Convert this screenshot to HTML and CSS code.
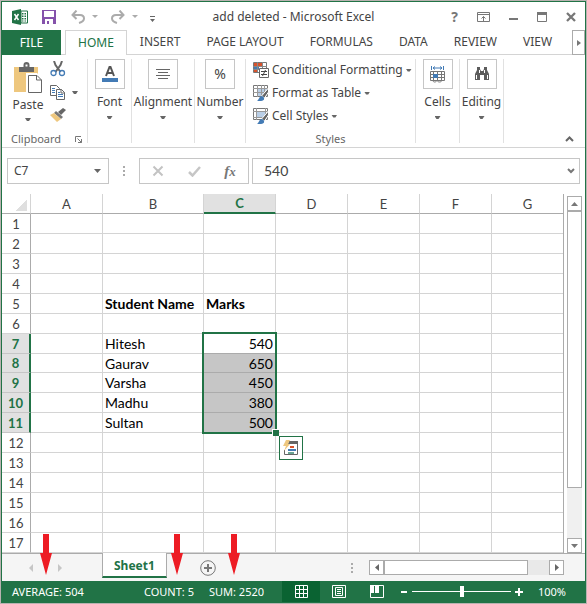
FILE: index.html
```html
<!DOCTYPE html>
<html lang="en">
<head>
<meta charset="utf-8">
<title>add deleted - Microsoft Excel</title>
<link rel="stylesheet" href="styles.css">
</head>
<body>
<div class="window">
  <header class="titlebar">
    <svg class="app-logo" width="16" height="16" viewBox="0 0 16 16" aria-hidden="true"><path d="M9 2h6.500v12H9z" fill="#fff" stroke="#217346"/><path d="M10 4h1.500v1.500H10zM12.500 4H14v1.500h-1.500zM10 6.500h1.500V8H10zM12.500 6.500H14V8h-1.500zM10 9h1.500v1.500H10zM12.500 9H14v1.500h-1.500zM10 11.500h1.500v1H10zM12.500 11.500H14v1h-1.500z" fill="#217346"/><path d="M0 2l9-2v16l-9-2z" fill="#217346"/><path d="M2.500 5l4 6M6.500 5l-4 6" stroke="#fff" stroke-width="1.500"/></svg>
    <button class="quick" aria-label="Save"><svg width="14" height="14" viewBox="0 0 14 14"><path d="M0 0h14v14H0z" fill="#8552ab"/><path d="M2 1h10v6H2zM3 9h8v5H3z" fill="#fff"/><path d="M5 11h2v3H5z" fill="#8552ab"/></svg></button>
    <button class="quick" aria-label="Undo"><svg width="14" height="14" viewBox="0 0 14 14" fill="none" stroke="#ababab" stroke-width="2"><path d="M5.500 0.500L1.500 5l4 4M2 5h7c3 0 4 2 4 3.500S11.500 12 8 13"/></svg></button>
    <button class="drop pale" aria-label="Undo history"></button>
    <button class="quick" aria-label="Redo"><svg width="14" height="14" viewBox="0 0 14 14" fill="none" stroke="#ababab" stroke-width="2"><path d="M8.500 0.500L12.500 5l-4 4M12 5H5C2 5 1 7 1 8.500S2.500 12 6 13"/></svg></button>
    <button class="drop pale" aria-label="Redo history"></button>
    <button class="customize" aria-label="Customize toolbar"><svg width="5" height="6" viewBox="0 0 5 6" fill="#666"><path d="M0 0h5v1H0zM0 3h5L2.500 6z"/></svg></button>
    <h1 class="title">add deleted - Microsoft Excel</h1>
    <button class="win-button help" aria-label="Help">?</button>
    <button class="win-button" aria-label="Ribbon display options"><svg width="13" height="10" viewBox="0 0 13 10" fill="none" stroke="#777"><path d="M.5.5h12v9H.5zM.5 2.500h12M6.500 9V4.500M4.500 6.500l2-2 2 2"/></svg></button>
    <button class="win-button" aria-label="Minimize"><svg width="10" height="10" viewBox="0 0 10 10"><path d="M1 6h9v2H1z" fill="#777"/></svg></button>
    <button class="win-button" aria-label="Maximize"><svg width="10" height="10" viewBox="0 0 10 10"><path d="M.5.5h9v9h-9z" fill="none" stroke="#777"/><path d="M0 0h10v3H0z" fill="#777"/></svg></button>
    <button class="win-button" aria-label="Close"><svg width="10" height="10" viewBox="0 0 10 10"><path d="M1 1l8 8M9 1L1 9" stroke="#777" stroke-width="2.300"/></svg></button>
  </header>

  <nav class="tabs" aria-label="Ribbon tabs">
    <button class="file">FILE</button>
    <button class="tab active">HOME</button>
    <button class="tab">INSERT</button>
    <button class="tab">PAGE LAYOUT</button>
    <button class="tab">FORMULAS</button>
    <button class="tab">DATA</button>
    <button class="tab">REVIEW</button>
    <button class="tab">VIEW</button>
    <button class="more-tabs" aria-label="More tabs"><svg width="4" height="6" viewBox="0 0 4 6"><path d="M0 0l4 3-4 3z" fill="#777"/></svg></button>
  </nav>

  <section class="ribbon" aria-label="Home">
    <div class="group clipboard">
      <div class="clip-tools">
        <button class="paste">
          <svg width="30" height="32" viewBox="0 0 30 32"><path d="M1 5h24v25H1z" fill="#eec77e"/><path d="M6 5h4.500V3a3 3 0 0 1 6 0v2H21v5H6z" fill="#666"/><path d="M12.500 2.500h2v2h-2z" fill="#fff"/><path d="M13 11h11l6 6v15H13z" fill="#fff"/><path d="M15.500 13.500H24l4.500 4.500v12.500h-13zM23.500 13.500V18h5" fill="#fff" stroke="#666"/></svg>
          <span>Paste</span><i class="caret"></i>
        </button>
        <div class="clip-side">
          <button aria-label="Cut"><svg width="16" height="16" viewBox="0 0 16 16" fill="none"><path d="M4 0l1.500 4 5 7M12 0l-1.500 4-5 7" stroke="#666" stroke-width="2"/><circle cx="3.500" cy="12" r="2.500" stroke="#437bb5" stroke-width="1.300"/><circle cx="12" cy="12" r="2.500" stroke="#437bb5" stroke-width="1.300"/></svg></button>
          <button class="copy" aria-label="Copy"><svg width="16" height="15" viewBox="0 0 16 15"><path d="M.5.500h6l3 3v7h-9z" fill="#fff" stroke="#666"/><path d="M2 3.500h3M2 5.500h3M2 7.500h3" stroke="#437bb5"/><path d="M6.500 4.500h5l3 3v7h-8z" fill="#fff" stroke="#666"/><path d="M8 7.500h2M8 9.500h5M8 11.500h5" stroke="#437bb5"/><path d="M11 4v4h4" fill="none" stroke="#666"/></svg><i class="caret"></i></button>
          <button aria-label="Format painter"><svg width="16" height="14" viewBox="0 0 16 14"><path d="M13 0l3 2-5 5-3-3z" fill="#666"/><path d="M6 3l7 6-2 2-7-6z" fill="#777"/><path d="M4 5l7 6-4 3L0 7z" fill="#eec77e"/></svg></button>
        </div>
      </div>
      <div class="group-name">Clipboard<button class="launcher" aria-label="Clipboard options"><svg width="7" height="7" viewBox="0 0 7 7" fill="none" stroke="#777"><path d="M.5 6V.5H6M2.500 2.500l4 4M6.500 3v3.500H3"/></svg></button></div>
    </div>
    <div class="group small"><button class="big"><span class="tile"><svg width="16" height="18" viewBox="0 0 16 18"><path d="M4 11L7.500 2h1L12 11M5.500 8h5" fill="none" stroke="#555" stroke-width="2"/><path d="M0 13h16v4H0z" fill="#437bb5"/></svg></span><span>Font</span><i class="caret"></i></button></div>
    <div class="group align"><button class="big"><span class="tile"><svg width="14" height="12" viewBox="0 0 14 12" stroke="#666"><path d="M0 1.500h14M2 4.500h10M0 7.500h14M2 10.500h10"/></svg></span><span>Alignment</span><i class="caret"></i></button></div>
    <div class="group number"><button class="big"><span class="tile percent">%</span><span>Number</span><i class="caret"></i></button></div>
    <div class="group styles">
      <div class="style-list">
        <button><svg width="16" height="16" viewBox="0 0 16 16"><path d="M.5.5h13v10H.5z" fill="#fff" stroke="#777"/><path d="M1 1h8v3H1zM1 8h3v2H1z" fill="#d9532c"/><path d="M1 5h5v2H1z" fill="#437bb5"/><path d="M0 4.500h14M0 7.500h14M4.500 0v10M9.500 0v10" stroke="#888"/><path d="M6.500 6.500h9v9h-9z" fill="#fff" stroke="#666"/><path d="M8 9.500h6M8 12.500h6M12.500 8l-3 6" stroke="#444"/></svg><span>Conditional Formatting</span><i class="caret"></i></button>
        <button><svg width="16" height="16" viewBox="0 0 16 16"><path d="M.5.5h14v11H.5z" fill="#fff" stroke="#777"/><path d="M4 4h10v7H4z" fill="#b9cee6"/><path d="M0 3.500h15M0 7.500h15M4.500 0v12M8.500 0v12M11.500 0v12" stroke="#999"/><path d="M15.500 3v4l-4 6-3-2z" fill="#666" stroke="#fff"/><path d="M4 16c2-1 2-5 5-5 3 1 3 5-1 5z" fill="#437bb5"/></svg><span>Format as Table</span><i class="caret"></i></button>
        <button><svg width="16" height="16" viewBox="0 0 16 16"><path d="M.5.5h14v11H.5z" fill="#fff" stroke="#777"/><path d="M4 4h8v6H4z" fill="#b9cee6"/><path d="M0 3.500h15M3.500 0v12M0 9.500h10M12.500 0v8" stroke="#999"/><path d="M15.500 3v4l-4 6-3-2z" fill="#666" stroke="#fff"/><path d="M4 16c2-1 2-5 5-5 3 1 3 5-1 5z" fill="#437bb5"/></svg><span>Cell Styles</span><i class="caret"></i></button>
      </div>
      <div class="group-name centered">Styles</div>
    </div>
    <div class="group small"><button class="big"><span class="tile"><svg width="16" height="17" viewBox="0 0 16 17" fill="none"><path d="M1.500 0v4M13.500 0v4M3 2h9M5 .5L3 2l2 1.500M10 .5L12 2l-2 1.500" stroke="#437bb5"/><path d="M.5 5.500h14v9H.500zM0 8.500h15M0 11.500h15M3.500 5v9M7.500 5v9M11.500 5v9M3 14.500c0 2 3 2 4 0 1 2 4 2 5 0" stroke="#777"/><path d="M3 8h5v4H3z" fill="#437bb5"/></svg></span><span>Cells</span><i class="caret"></i></button></div>
    <div class="group small"><button class="big"><span class="tile"><svg width="16" height="14" viewBox="0 0 16 14" fill="#5c5c5c"><path d="M3 0h3v2l1 2h2l1-2V0h3v3l2 4v6h-5V8H6v5H1V7l2-4z"/><path d="M2.500 8v4M13.500 8v4M5.500 3v3M10.500 3v3" stroke="#fff"/></svg></span><span>Editing</span><i class="caret"></i></button></div>
    <button class="collapse" aria-label="Collapse ribbon"><svg width="9" height="6" viewBox="0 0 9 6"><path d="M1 5l3.500-3.500L8 5" fill="none" stroke="#666" stroke-width="2"/></svg></button>
  </section>

  <section class="formula-bar" aria-label="Formula bar">
    <div class="name-box"><input aria-label="Name box" value="C7"><button class="drop" aria-label="Names"></button></div>
    <span class="dots"></span>
    <div class="entry">
      <button aria-label="Cancel"><svg width="12" height="12" viewBox="0 0 12 12"><path d="M1.500 1.500l9 9M10.500 1.500l-9 9" stroke="#c3c3c3" stroke-width="2"/></svg></button>
      <button aria-label="Enter"><svg width="13" height="11" viewBox="0 0 13 11"><path d="M1 6l3.500 3.500L12 1" fill="none" stroke="#c6c6c6" stroke-width="2.500"/></svg></button>
      <button class="fx" aria-label="Insert function">f<small>x</small></button>
    </div>
    <div class="formula"><input aria-label="Formula" value="540"><button aria-label="Expand formula bar"><svg width="8" height="6" viewBox="0 0 8 6"><path d="M1 1l3 3 3-3" fill="none" stroke="#777" stroke-width="2"/></svg></button></div>
  </section>

  <main class="sheet">
    <table class="grid">
      <colgroup><col class="c-row"><col class="c-std"><col class="c-name"><col class="c-std"><col class="c-std"><col class="c-std"><col class="c-std"><col></colgroup>
      <thead><tr><th class="corner"></th><th>A</th><th>B</th><th class="on">C</th><th>D</th><th>E</th><th>F</th><th>G</th></tr></thead>
      <tbody>
        <tr><th>1</th><td></td><td></td><td></td><td></td><td></td><td></td><td></td></tr>
        <tr><th>2</th><td></td><td></td><td></td><td></td><td></td><td></td><td></td></tr>
        <tr><th>3</th><td></td><td></td><td></td><td></td><td></td><td></td><td></td></tr>
        <tr><th>4</th><td></td><td></td><td></td><td></td><td></td><td></td><td></td></tr>
        <tr><th>5</th><td></td><td class="bold">Student Name</td><td class="bold">Marks</td><td></td><td></td><td></td><td></td></tr>
        <tr><th>6</th><td></td><td></td><td></td><td></td><td></td><td></td><td></td></tr>
        <tr class="on"><th>7</th><td></td><td>Hitesh</td><td class="num first">540<div class="selection"></div></td><td></td><td></td><td></td><td></td></tr>
        <tr class="on short"><th>8</th><td></td><td>Gaurav</td><td class="num">650</td><td></td><td></td><td></td><td></td></tr>
        <tr class="on"><th>9</th><td></td><td>Varsha</td><td class="num">450</td><td></td><td></td><td></td><td></td></tr>
        <tr class="on"><th>10</th><td></td><td>Madhu</td><td class="num">380</td><td></td><td></td><td></td><td></td></tr>
        <tr class="on"><th>11</th><td></td><td>Sultan</td><td class="num">500<button class="analysis" aria-label="Quick analysis"><svg width="16" height="16" viewBox="0 0 16 16"><path d="M4.500 1.500h10v13h-13V10" fill="none" stroke="#666"/><path d="M6 1h9v3H5z" fill="#666"/><path d="M7 6h4v2H7z" fill="#d9532c"/><path d="M5 9h8v2H5z" fill="#437bb5"/><path d="M5 12h6v2H5z" fill="#6ca494"/><path d="M3 0h4L5 4h2l-6 7 2-5H0z" fill="#eec77e"/></svg></button></td><td></td><td></td><td></td><td></td></tr>
        <tr><th>12</th><td></td><td></td><td></td><td></td><td></td><td></td><td></td></tr>
        <tr><th>13</th><td></td><td></td><td></td><td></td><td></td><td></td><td></td></tr>
        <tr><th>14</th><td></td><td></td><td></td><td></td><td></td><td></td><td></td></tr>
        <tr><th>15</th><td></td><td></td><td></td><td></td><td></td><td></td><td></td></tr>
        <tr><th>16</th><td></td><td></td><td></td><td></td><td></td><td></td><td></td></tr>
        <tr><th>17</th><td></td><td></td><td></td><td></td><td></td><td></td><td></td></tr>
      </tbody>
    </table>
    <div class="vscroll">
      <button class="scroll-button" aria-label="Scroll up"><svg width="7" height="4" viewBox="0 0 7 4"><path d="M0 4l3.500-4L7 4z" fill="#777"/></svg></button>
      <div class="vthumb"></div><div class="vtrack"></div>
      <button class="scroll-button" aria-label="Scroll down"><svg width="7" height="4" viewBox="0 0 7 4"><path d="M0 0l3.500 4L7 0z" fill="#777"/></svg></button>
    </div>
  </main>

  <nav class="sheetbar" aria-label="Sheets">
    <div class="sheet-nav">
      <button aria-label="Previous sheet"><svg width="4" height="8" viewBox="0 0 4 8"><path d="M4 0v8L0 4z" fill="#c6c6c6"/></svg></button>
      <button aria-label="Next sheet"><svg width="4" height="8" viewBox="0 0 4 8"><path d="M0 0v8l4-4z" fill="#c6c6c6"/></svg></button>
    </div>
    <button class="sheet-tab">Sheet1</button>
    <button class="add-sheet" aria-label="New sheet"><svg width="16" height="16" viewBox="0 0 16 16" fill="none" stroke="#777"><circle cx="8" cy="8" r="7.300"/><path d="M8 4v8M4 8h8" stroke-width="2"/></svg></button>
    <span class="dots"></span>
    <div class="hscroll">
      <button class="scroll-button" aria-label="Scroll left"><svg width="4" height="7" viewBox="0 0 4 7"><path d="M4 0v7L0 3.500z" fill="#666"/></svg></button>
      <div class="hthumb"></div><div class="htrack"></div>
      <button class="scroll-button" aria-label="Scroll right"><svg width="4" height="7" viewBox="0 0 4 7"><path d="M0 0v7l4-3.500z" fill="#666"/></svg></button>
    </div>
  </nav>

  <footer class="status">
    <span class="average">AVERAGE: 504</span><span class="count">COUNT: 5</span><span class="sum">SUM: 2520</span>
    <button class="view current" aria-label="Normal view"><svg width="13" height="13" viewBox="0 0 13 13" fill="none" stroke="#fff"><path d="M.5.5h12v12H.5zM4.500 0v13M8.500 0v13M0 4.500h13M0 8.500h13"/></svg></button>
    <button class="view" aria-label="Page layout view"><svg width="14" height="13" viewBox="0 0 14 13" fill="none" stroke="#fff"><path d="M.5.5h13v12H.5zM3.500 2.500h7v8h-7zM5 4.500h4M5 6.500h4M5 8.500h4"/></svg></button>
    <button class="view" aria-label="Page break preview"><svg width="14" height="13" viewBox="0 0 14 13"><path d="M.5.500h13v12H.5z" fill="none" stroke="#fff"/><path d="M0 0h4v8H0zM5 0h4v8H5z" fill="#fff"/></svg></button>
    <button class="zoom-step" aria-label="Zoom out"><svg width="8" height="8" viewBox="0 0 8 8"><path d="M1 3h6v2H1z" fill="#fff"/></svg></button>
    <input class="zoom" type="range" min="10" max="190" value="100" aria-label="Zoom">
    <button class="zoom-step" aria-label="Zoom in"><svg width="8" height="8" viewBox="0 0 8 8"><path d="M0 3h3V0h2v3h3v2H5v3H3V5H0z" fill="#fff"/></svg></button>
    <button class="percent-level">100%</button>
  </footer>
  <svg class="arrow over-average" width="12" height="41" viewBox="0 0 12 41"><path d="M3 0h6v19h3L6 41 0 19h3z" fill="#ed1c24"/></svg>
  <svg class="arrow over-count" width="12" height="41" viewBox="0 0 12 41"><path d="M3 0h6v19h3L6 41 0 19h3z" fill="#ed1c24"/></svg>
  <svg class="arrow over-sum" width="12" height="41" viewBox="0 0 12 41"><path d="M3 0h6v19h3L6 41 0 19h3z" fill="#ed1c24"/></svg>
</div>
</body>
</html>
```
FILE: styles.css
```css
* { box-sizing: border-box; }
body { margin: 0; background: #b8b2b0; font: 12px/16px "Noto Sans", "Open Sans", sans-serif; color: #444; }
button { margin: 0; padding: 0; border: 0; background: none; font: inherit; color: inherit; white-space: nowrap; }
input { min-width: 0; margin: 0; border: 0; padding: 0; background: none; font: inherit; color: inherit; outline: 0; }
svg { display: block; flex: none; }

.window { position: relative; display: flex; flex-direction: column; min-height: calc(100vh - 2px); margin: 1px; border: 1px solid #217346; background: #fff; }
.caret { display: block; flex: none; width: 6px; height: 3px; background: #666; clip-path: polygon(0 0, 100% 0, 67% 100%, 33% 100%); }

.titlebar { display: flex; align-items: center; height: 28px; padding: 1px 0 0 10px; }
.quick { display: flex; justify-content: center; width: 25px; }
.app-logo { margin-right: 8px; }
.quick + .quick { margin-left: 4px; }
.drop { display: flex; justify-content: center; align-items: center; width: 15px; }
.drop::before { content: ""; width: 7px; height: 4px; background: #666; clip-path: polygon(0 0, 100% 0, 50% 100%); }
.drop.pale { width: 10px; }
.drop.pale::before { width: 6px; height: 3px; background: #ababab; }
.pale + .quick { margin-left: 5px; }
.customize { display: flex; justify-content: center; width: 25px; padding-top: 4px; }
.title { flex: 1; margin: 0; padding-right: 18px; font-size: 12px; font-weight: 400; text-align: center; white-space: nowrap; }
.win-button { display: flex; justify-content: center; flex: none; width: 29px; color: #777; }
.help { font-size: 14px; font-weight: 700; }

.tabs { display: flex; height: 25px; border-bottom: 1px solid #d4d4d4; }
.file { flex: none; width: 59px; height: 25px; margin-right: 4px; background: #217346; color: #fff; }
.tab { padding: 0 13px; }
.tab.active { height: 25px; padding: 0 12px; border: 1px solid #d4d4d4; border-bottom: 0; background: #fff; color: #217346; }
.more-tabs { display: flex; align-items: center; justify-content: center; flex: none; width: 13px; height: 25px; margin-left: auto; border: 1px solid #ababab; background: #fff; }

.ribbon { display: flex; height: 93px; padding: 4px 0; border-bottom: 1px solid #d4d4d4; }
.group { position: relative; border-right: 1px solid #e1e1e1; height: 84px; }
.small { width: 44px; }
.align { width: 63px; }
.number { width: 51px; }
.styles { width: 170px; }
.clipboard { width: 86px; }
.big { display: flex; flex-direction: column; align-items: center; width: 100%; }
.big span + span { margin-top: 5px; }
.big .caret { margin-top: 6px; }
.tile { display: flex; align-items: center; justify-content: center; width: 30px; height: 30px; border: 1px solid #c6c6c6; }
.percent { font-size: 14px; }
.clip-tools { display: flex; height: 72px; gap: 6px; padding-left: 10px; }
.paste { display: flex; flex-direction: column; align-items: center; width: 32px; padding-top: 3px; }
.paste span { margin-top: 3px; }
.paste .caret { margin-top: 5px; }
.clip-side { display: flex; flex-direction: column; gap: 8px; padding-top: 2px; }
.copy { display: flex; align-items: center; gap: 6px; }
.group-name { display: flex; align-items: center; justify-content: space-between; padding: 0 5px 0 9px; font-size: 11px; color: #666; }
.centered { justify-content: center; padding: 0; }
.style-list { display: flex; flex-direction: column; gap: 7px; height: 72px; padding: 3px 0 0 7px; }
.style-list button { display: flex; align-items: center; gap: 3px; height: 16px; }
.collapse { margin-left: auto; align-self: flex-end; padding: 0 11px 1px 0; }

.formula-bar { display: flex; align-items: center; padding: 10px 5px; }
.name-box, .entry, .formula { display: flex; align-items: center; height: 26px; border: 1px solid #c6c6c6; }
.name-box { width: 102px; padding: 0 3px 0 6px; }
.name-box input, .formula input { flex: 1; width: 50px; }
.formula { flex: 1; padding: 0 4px 0 11px; font: 14px/18px Lato, sans-serif; }
.dots { width: 2px; height: 10px; background: repeating-linear-gradient(#ababab 0 2px, transparent 2px 4px); }
.formula-bar .dots { margin: 0 14px; }
.entry { justify-content: space-around; width: 110px; margin-right: 3px; }
.entry button { display: flex; justify-content: center; width: 30px; }
.entry .fx { display: block; font: italic 700 15px/18px "Liberation Serif", serif; color: #777; }
.fx small { font-size: 13px; }

.sheet { display: flex; }
.grid { flex: 1; width: 0; table-layout: fixed; border-collapse: separate; border-spacing: 0; border-right: 1px solid #ababab; font: 14px/18px Lato, sans-serif; color: #000; }
.c-row { width: 29px; }
.c-std { width: 72px; }
.c-name { width: 101px; }
.grid th { padding: 0; font-size: 13px; font-weight: 400; color: #444; }
.grid thead th { height: 20px; border-right: 1px solid #d4d4d4; border-bottom: 1px solid #ababab; }
.grid thead th:last-child { border-right: 0; }
.grid .corner { background: linear-gradient(135deg, transparent 50%, #dfdfdf 50%) 13px 5px / 12px 12px no-repeat; }
.grid thead .on { border-bottom: 2px solid #217346; background: #e1e1e1; color: #217346; font-weight: 700; }
.grid tbody tr { height: 20px; }
.grid tbody .short { height: 19px; }
.grid tbody th { border-right: 1px solid #ababab; border-bottom: 1px solid #d4d4d4; }
.grid tbody .on th { border-right: 2px solid #217346; border-bottom-color: #c6c6c6; background: #e1e1e1; color: #217346; font-weight: 700; }
.grid td { padding: 0 2px; border-right: 1px solid #d4d4d4; border-bottom: 1px solid #d4d4d4; line-height: 17px; white-space: nowrap; }
.grid td:last-child { border-right: 0; }
.grid .bold { font-weight: 700; }
.grid .num { position: relative; text-align: right; background: #c6c6c6; border-bottom-color: #ababab; }
.grid .first { background: #fff; }
.selection { position: absolute; z-index: 1; top: -2px; left: -2px; right: -2px; height: 102px; border: 2px solid #217346; }
.selection::after { content: ""; position: absolute; right: -4px; bottom: -4px; width: 6px; height: 6px; border: 1px solid #fff; border-width: 1px 0 0 1px; background: #217346; }
.analysis { position: absolute; z-index: 2; top: 23px; left: 75px; display: flex; align-items: center; justify-content: center; width: 24px; height: 24px; border: 1px solid #217346; background: #fff; }
.vscroll { display: flex; flex-direction: column; width: 15px; margin: 2px 3px 0; }
.scroll-button { display: flex; align-items: center; justify-content: center; flex: none; width: 15px; height: 15px; border: 1px solid #ababab; background: #fff; }
.vthumb { flex: 277; border: 1px solid #ababab; }
.vtrack { flex: 50; background: #f0f0f0; }

.sheetbar { display: flex; flex: 1; align-items: center; min-height: 28px; padding-right: 21px; border-top: 1px solid #ababab; background: #f5f5f5; }
.sheet-nav { display: flex; gap: 25px; width: 100px; padding-left: 27px; }
.sheet-tab { align-self: flex-start; height: 25px; margin-top: -1px; padding: 2px 11px 0; border: 1px solid #ababab; border-width: 0 1px; border-bottom: 2px solid #217346; background: #fff; color: #217346; font-weight: 700; }
.add-sheet { margin-left: 33px; }
.sheetbar .dots { margin: 0 16px 0 auto; }
.hscroll { display: flex; width: 195px; background: #e9e9e9; }
.hthumb { flex: 144; border: 1px solid #ababab; background: #fff; }
.htrack { flex: 21; }

.status { display: flex; align-items: center; height: 21px; padding-left: 10px; background: #217346; color: #fff; font-size: 11px; }
.average { width: 132px; }
.count { width: 65px; }
.sum { width: 73px; }
.view { display: flex; align-items: center; justify-content: center; width: 38px; height: 21px; }
.current { background: #0a6332; }
.zoom-step { padding: 0 4px; }
.zoom { appearance: none; flex: 1; height: 12px; background: linear-gradient(#fff, #fff) center / 100% 1px no-repeat; }
.zoom::-webkit-slider-thumb { appearance: none; width: 4px; height: 11px; background: #fff; }
.percent-level { width: 58px; padding-right: 8px; }

.arrow { position: absolute; bottom: 27px; }
.over-average { left: 38px; }
.over-count { left: 169px; }
.over-sum { left: 226px; }
```
